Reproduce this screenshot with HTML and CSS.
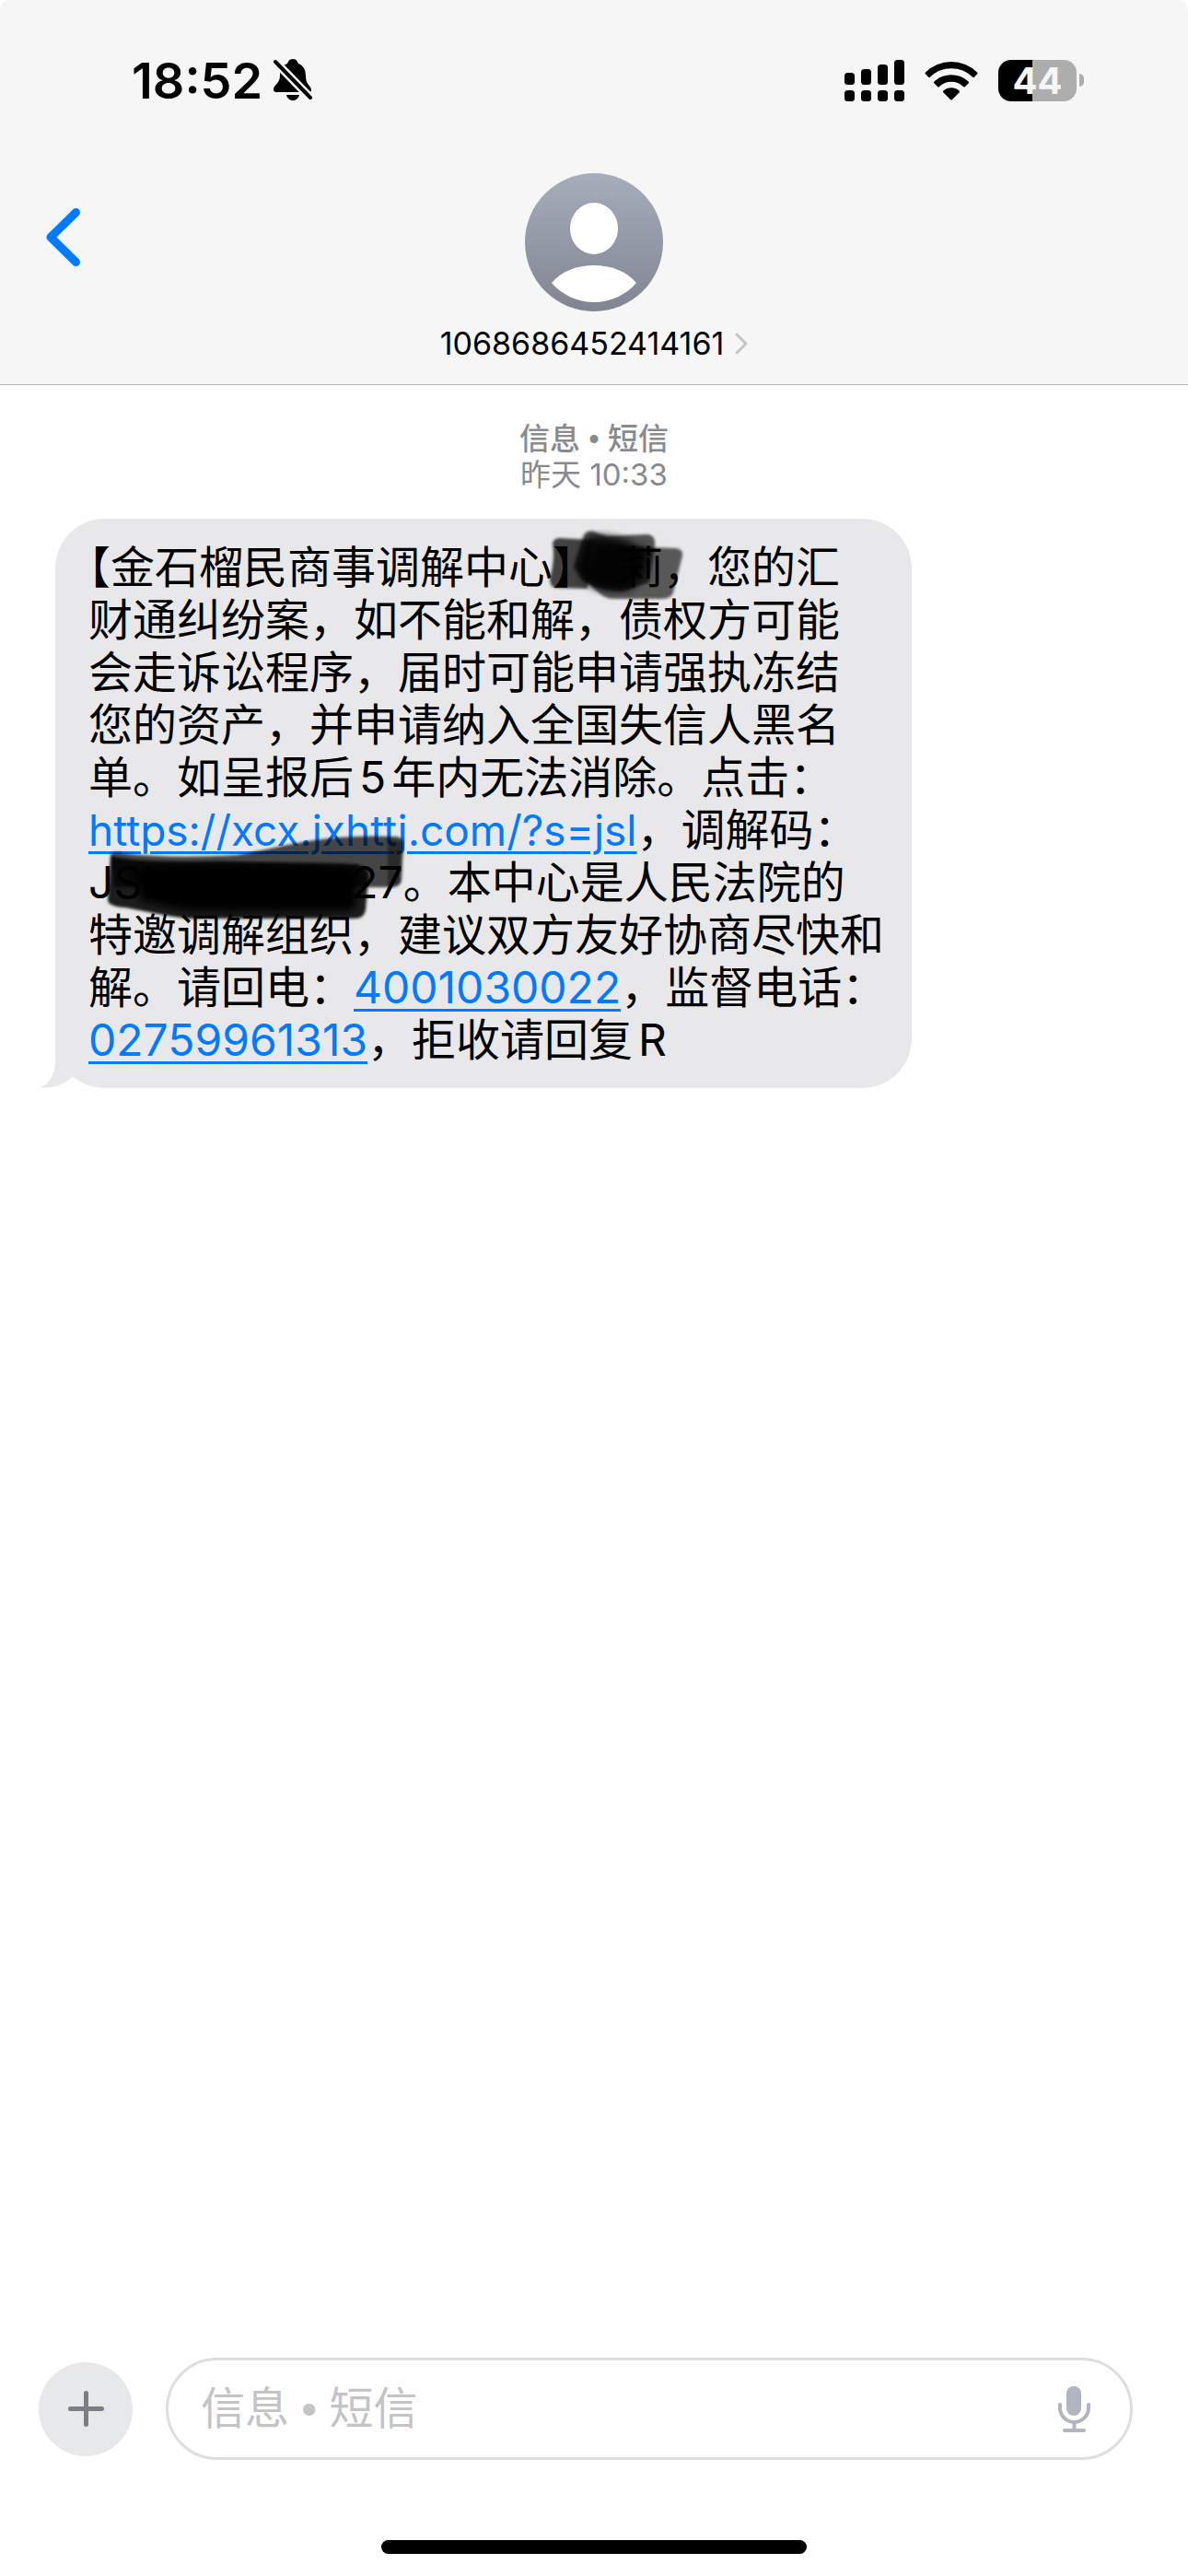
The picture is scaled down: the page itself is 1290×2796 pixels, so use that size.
FILE: index.html
```html
<!DOCTYPE html>
<html lang="zh-CN">
<head>
    <meta charset="UTF-8">
    <meta name="viewport" content="width=device-width, initial-scale=1.0">
    <title>1068686452414161</title>
    <link rel="stylesheet" href="styles.css">
</head>
<body>
    <header class="header">
        <div class="status-bar">
            <div class="status-left">
                <span class="time">18:52</span>
                <svg class="bell" width="42" height="46" viewBox="0 0 42 46">
                    <path d="M21 0c4 0 5 3 6 5 6 2 8 8 8 14 0 9 6 10 6 15 0 1-1 2-2 2H3c-2 0-3-1-3-3 0-5 7-6 7-15 0-6 2-11 8-13 1-2 2-5 6-5z"/>
                    <path d="M14 39h14c-1 4-4 6-7 6s-6-2-7-6z"/>
                    <path d="M2 3l38 39" stroke="#f6f6f6" stroke-width="9"/>
                    <path d="M2 3l38 39" stroke="#000" stroke-width="4" stroke-linecap="round"/>
                </svg>
            </div>
            <div class="status-right">
                <svg width="65" height="45" viewBox="0 0 65 45">
                    <rect x="0" y="14" width="11" height="13" rx="3.5"/>
                    <rect x="18" y="10" width="11" height="17" rx="3.5"/>
                    <rect x="36" y="5" width="11" height="22" rx="3.5"/>
                    <rect x="54" y="0" width="11" height="27" rx="3.5"/>
                    <rect x="0" y="33" width="11" height="12" rx="3.5"/>
                    <rect x="18" y="33" width="11" height="12" rx="3.5"/>
                    <rect x="36" y="33" width="11" height="12" rx="3.5"/>
                    <rect x="54" y="33" width="11" height="12" rx="3.5"/>
                </svg>
                <svg width="58" height="43" viewBox="0 0 58 43">
                    <path d="M1 12.500a40 40 0 0 1 56 0q1 1 0 2l-3 3q-1 1-2 0a33 33 0 0 0-46 0q-1 1-2 0l-3-3q-1-1 0-2z"/>
                    <path d="M10.500 22.500a27 27 0 0 1 37 0q1 1 0 2l-3.500 3.500q-1 1-2 0a19 19 0 0 0-26 0q-1 1-2 0L10.500 24.500q-1-1 0-2z"/>
                    <path d="M20.500 32.500a13 13 0 0 1 17 0q1 1 0 2l-7.500 7.500q-1 1-2 0l-7.500-7.500q-1-1 0-2z"/>
                </svg>
                <div class="battery">
                    <span class="battery-body">44</span>
                    <span class="battery-cap"></span>
                </div>
            </div>
        </div>
        <nav class="nav">
            <button type="button" class="back" aria-label="返回">
                <svg width="37" height="63" viewBox="0 0 37 63">
                    <path d="M32.500 4.500L5 31.500l27.500 27" fill="none" stroke="#007aff" stroke-width="9" stroke-linecap="round" stroke-linejoin="round"/>
                </svg>
            </button>
            <button type="button" class="contact">
                <svg width="150" height="150" viewBox="0 0 150 150">
                    <defs>
                        <linearGradient id="avatar" x1="0" y1="0" x2="0" y2="1">
                            <stop offset="0" stop-color="#a6adbb"/>
                            <stop offset="1" stop-color="#818591"/>
                        </linearGradient>
                    </defs>
                    <circle cx="75" cy="75" r="75" fill="url(#avatar)"/>
                    <ellipse cx="75" cy="60" rx="26" ry="28" fill="#fff"/>
                    <path d="M29 119C40 106 57 100 75 100s35 6 46 19c-11 13-28 21-46 21s-35-8-46-21z" fill="#fff"/>
                </svg>
                <span class="contact-name">1068686452414161<svg class="chevron" width="14" height="24" viewBox="0 0 14 24"><path d="M2 2l10 10L2 22" fill="none" stroke="#c4c4c6" stroke-width="3" stroke-linecap="round" stroke-linejoin="round"/></svg></span>
            </button>
        </nav>
    </header>

    <main class="messages">
        <div class="meta">
            <strong>信息 • 短信</strong>
            <span>昨天 10:33</span>
        </div>
        <div class="bubble">
            <p>【金石榴民商事调解中心】<span class="hidden-name"></span>莉，您的汇<br>
            财通纠纷案，如不能和解，债权方可能<br>
            会走诉讼程序，届时可能申请强执冻结<br>
            您的资产，并申请纳入全国失信人黑名<br>
            单。如呈报后<span class="digit">5</span>年内无法消除。点击：<br>
            <a class="url" href="#">https://xcx.jxhttj.com/?s=jsl</a>，调解码：<br>
            JSL<span class="hidden-code"></span>27。本中心是人民法院的<br>
            特邀调解组织，建议双方友好协商尽快和<br>
            解。请回电：<a href="#">4001030022</a>，监督电话：<br>
            <a href="#">02759961313</a>，拒收请回复<span class="digit">R</span></p>

            <!-- marker strokes over the name and the code -->
            <svg class="marker marker-name" width="160" height="90" viewBox="0 0 160 90">
                <g filter="url(#soft)">
                    <path d="M10 17q2-5 8-5l35 2-5 53-35-1q-6-1-6-10 6-20 3-39z" opacity=".72"/>
                    <path d="M44 9q5-7 13-3l12 4 43-2q10 0 9 12l-6 40-30 10q-30-3-43-13l-9-14z" opacity=".65"/>
                    <path d="M60 20l84 3q8 1 7 8l-10 40q-2 7-12 7H76q-8 0-15-6l-14-12z" opacity=".62"/>
                </g>
                <path d="M48 10q24-4 50 8l15 8-5 26-12 16q-26 4-44-3-14-12-14-24z" opacity=".9" filter="url(#softer)"/>
            </svg>
            <svg class="marker marker-code" width="350" height="110" viewBox="0 0 350 110">
                <defs>
                    <filter id="soft"><feGaussianBlur stdDeviation="1.500"/></filter>
                    <filter id="softer"><feGaussianBlur stdDeviation="4"/></filter>
                </defs>
                <g filter="url(#soft)">
                    <path d="M12 26q6-4 13-1c40 5 84 4 124 2 44-7 92-24 172-20q10 0 9 10l-2 38q-2 7-10 7H16z" opacity=".7"/>
                    <path d="M12 28q30 8 120 6l148 3q13 4 12 14l-3 36q-2 9-12 9H95C72 93 50 88 28 84q-18-1-19-8z" opacity=".88"/>
                    <path d="M313 10l15 2-2 46-13 4z" opacity=".4"/>
                </g>
                <path d="M40 42q40-6 226-2 14 2 14 12l-2 28q-2 8-12 8H100Q68 82 44 76z" filter="url(#softer)"/>
            </svg>
            <svg class="tail" width="44" height="60" viewBox="0 0 44 60">
                <path d="M16 0v31C16 45 10 55 0 59c15 2 27-4 36-12l8-10V0z" fill="#e8e8ea"/>
            </svg>
        </div>
    </main>

    <footer class="footer">
        <form class="composer">
            <button type="button" class="plus" aria-label="添加">
                <svg width="39" height="39" viewBox="0 0 39 39">
                    <path d="M19.500 2.500v34M2.500 19.500h34" stroke="#7d7d85" stroke-width="5" stroke-linecap="round"/>
                </svg>
            </button>
            <div class="field">
                <input type="text" aria-label="信息" placeholder="信息 • 短信">
                <button type="button" class="mic" aria-label="听写">
                    <svg width="35" height="50" viewBox="0 0 35 50">
                        <rect x="9" y="0" width="16" height="32" rx="8" fill="#b0b5bf"/>
                        <path d="M2 20v3.500a15.500 15.500 0 0 0 31 0V20M17.500 40v7M7 48h21" fill="none" stroke="#b0b5bf" stroke-width="4" stroke-linecap="round"/>
                    </svg>
                </button>
            </div>
        </form>
        <div class="home-bar"></div>
    </footer>
</body>
</html>
```
FILE: styles.css
```css
* {
    box-sizing: border-box;
}
body {
    margin: 0;
    min-height: 100vh;
    display: flex;
    flex-direction: column;
    background-color: #fff;
    color: #000;
    font-family: Inter, "Noto Sans CJK SC", sans-serif;
}
button {
    border: none;
    padding: 0;
    background: none;
    color: inherit;
    font: inherit;
    cursor: pointer;
}
svg {
    display: block;
}

/* Header */
.header {
    background-color: #f6f6f6;
    border-bottom: 1px solid #b0b0b2;
    border-radius: 10px 10px 0 0;
}
.status-bar {
    display: flex;
    justify-content: space-between;
    align-items: center;
    height: 174px;
    padding: 0 113px 0 143px;
}
.status-left {
    display: flex;
    align-items: center;
    gap: 12px;
}
.time {
    font-size: 54px;
    font-weight: 600;
}
.status-right {
    display: flex;
    align-items: center;
    gap: 22px;
}
.battery {
    display: flex;
    align-items: center;
    gap: 3px;
}
.battery-body {
    width: 85px;
    height: 45px;
    border-radius: 14px;
    background: linear-gradient(to right, #000 44%, #adadad 44%);
    color: #f6f6f6;
    font-size: 40px;
    font-weight: 700;
    line-height: 45px;
    text-align: center;
}
.battery-cap {
    width: 5px;
    height: 14px;
    border-radius: 0 7px 7px 0;
    background-color: #adadad;
}
.nav {
    display: grid;
    grid-template-columns: 1fr auto 1fr;
    padding: 14px 50px 24px;
}
.back {
    justify-self: start;
    height: 139px;
}
.contact {
    display: flex;
    flex-direction: column;
    align-items: center;
    gap: 15px;
}
.contact-name {
    display: flex;
    align-items: center;
    gap: 12px;
    font-size: 34px;
    line-height: 40px;
}

/* Messages */
.messages {
    flex: 1;
    padding: 40px 60px;
}
.meta {
    display: flex;
    flex-direction: column;
    align-items: center;
    margin-bottom: 29px;
    color: #8a8a8e;
    font-size: 33px;
    line-height: 38px;
}
.meta strong {
    font-family: "Liberation Sans", "Noto Sans CJK SC", sans-serif;
    font-weight: 500;
}
.bubble {
    position: relative;
    width: 930px;
    max-width: 100%;
    padding: 24px 20px 24px 36px;
    border-radius: 54px;
    background-color: #e8e8ea;
}
.bubble p {
    margin: 0;
    font-size: 48px;
    line-height: 57px;
    text-spacing-trim: trim-start;
}
.bubble a {
    color: #007aff;
    text-decoration: underline;
    text-decoration-thickness: 3px;
    text-underline-offset: 6px;
}
.bubble .url {
    font-size: 46px;
    line-height: 1;
}
.digit {
    margin: 0 6px;
}
.hidden-name {
    display: inline-block;
    width: 24px;
}
.hidden-code {
    display: inline-block;
    width: 200px;
}
.marker {
    position: absolute;
}
.marker-name {
    left: 530px;
    top: 9px;
}
.marker-code {
    left: 48px;
    top: 338px;
}
.tail {
    position: absolute;
    left: -16px;
    bottom: 0;
}

/* Composer */
.composer {
    display: flex;
    align-items: center;
    gap: 36px;
    padding: 0 60px 0 42px;
}
.plus {
    display: flex;
    align-items: center;
    justify-content: center;
    width: 102px;
    height: 102px;
    border-radius: 50%;
    background-color: #e7e8ea;
}
.field {
    flex: 1;
    display: flex;
    align-items: center;
    height: 111px;
    padding: 0 43px 0 35px;
    border: 3px solid #dedede;
    border-radius: 56px;
}
.field input {
    flex: 1;
    min-width: 0;
    border: none;
    outline: none;
    padding: 0;
    background: none;
    font-family: "Liberation Sans", "Noto Sans CJK SC", sans-serif;
    font-size: 48px;
}
.field input::placeholder {
    color: #c4c4c6;
}
.home-bar {
    width: 462px;
    height: 15px;
    margin: 87px auto 24px;
    border-radius: 8px;
    background-color: #000;
}
```
